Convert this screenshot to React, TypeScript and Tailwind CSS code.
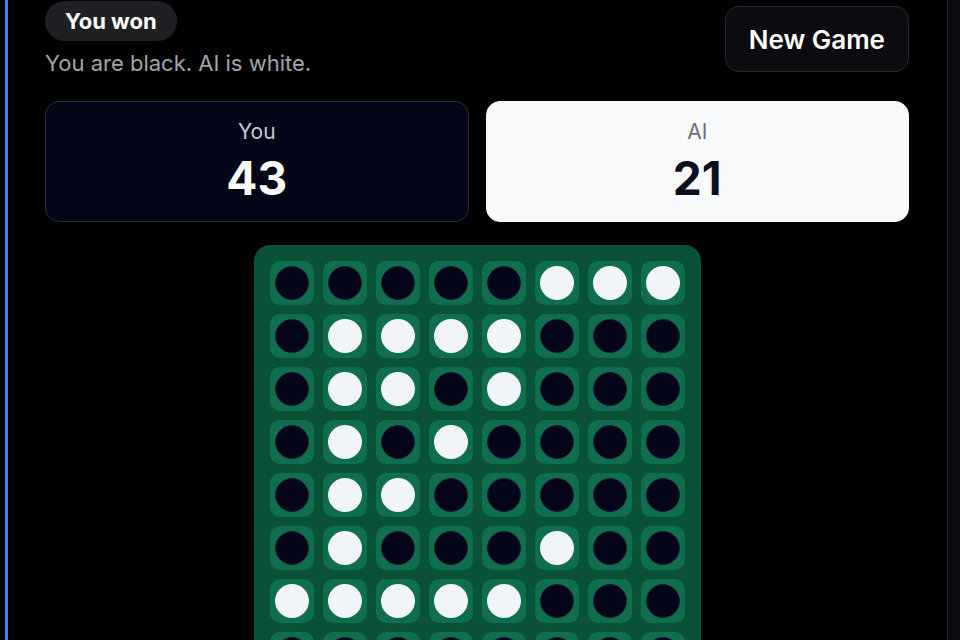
import React from 'react';

type Disc = 'B' | 'W';

// 8x8 final position, top row first
const rows = [
  'BBBBBWWW',
  'BWWWWBBB',
  'BWWBWBBB',
  'BWBWBBBB',
  'BWWBBBBB',
  'BWBBBWBB',
  'WWWWWBBB',
  'BBBBBBBB',
];

const board: Disc[][] = rows.map((r) => r.split('') as Disc[]);

const Cell: React.FC<{ disc: Disc }> = ({ disc }) => (
  <div className="flex h-[44px] w-[44px] items-center justify-center rounded-[10px] bg-[#0e6e4d]">
    {disc === 'B' ? (
      <div className="h-[34px] w-[34px] rounded-full border border-[#1c1a3a] bg-[#05051a]" />
    ) : (
      <div className="h-[34px] w-[34px] rounded-full bg-[#f1f4f8]" />
    )}
  </div>
);

const ScoreCard: React.FC<{ label: string; score: number; light?: boolean }> = ({ label, score, light }) => (
  <div
    className={
      light
        ? 'flex h-[121px] flex-col items-center rounded-[14px] border border-[#f8fafc] bg-[#f8fafc] pt-[16px]'
        : 'flex h-[121px] flex-col items-center rounded-[14px] border border-[#2b2d3a] bg-[#030616] pt-[16px]'
    }
  >
    <div className={light ? 'text-[21px] leading-[28px] text-[#6b6f7a]' : 'text-[21px] leading-[28px] text-[#c9cad0]'}>
      {label}
    </div>
    <div
      className={
        light
          ? 'mt-[8px] text-[46px] font-bold leading-[48px] text-[#0b1020]'
          : 'mt-[8px] text-[46px] font-bold leading-[48px] text-white'
      }
    >
      {score}
    </div>
  </div>
);

const App: React.FC = () => {
  const you = board.flat().filter((d) => d === 'B').length;
  const ai = board.flat().filter((d) => d === 'W').length;

  return (
    <div className="flex h-[640px] w-[960px] overflow-hidden bg-black font-['Inter',sans-serif] text-white">
      <div className="w-[5px]" />
      <div className="w-[3px] bg-[#3b82f6]" />

      <main className="flex-1 pl-[37px] pr-[38px]">
        <div className="flex items-start justify-between">
          <div>
            <div className="mt-[1px] inline-flex h-[40px] items-center rounded-full bg-[#1f2024] px-[20px] text-[22px] font-bold">
              You won
            </div>
            <p className="mt-[7px] text-[22px] leading-[30px] text-[#a3a3ab]">You are black. AI is white.</p>
          </div>
          <button className="mt-[6px] h-[66px] rounded-[14px] border border-[#2a2b31] bg-[#0c0c10] px-[23px] text-[26px] font-semibold text-white">
            New Game
          </button>
        </div>

        <div className="mt-[23px] grid grid-cols-2 gap-[17px]">
          <ScoreCard label="You" score={you} />
          <ScoreCard label="AI" score={ai} light />
        </div>

        <div className="mx-auto mt-[23px] grid w-[447px] grid-cols-8 gap-[9px] rounded-[16px] bg-[#0a5237] p-[16px]">
          {board.map((row, r) =>
            row.map((disc, c) => <Cell key={`${r}-${c}`} disc={disc} />)
          )}
        </div>
      </main>

      <div className="w-[13px] border-l border-[#26262b] bg-[#0a0a10]" />
    </div>
  );
};

export default App;
